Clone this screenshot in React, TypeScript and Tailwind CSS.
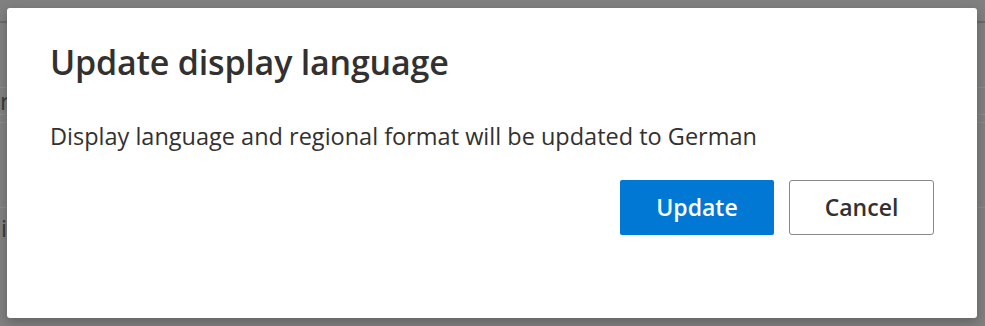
import React from 'react'

const font = { fontFamily: '"Open Sans", "Noto Sans", "Liberation Sans", sans-serif' }

function Backdrop() {
  // faint page content sitting behind the dim overlay
  return (
    <div className="absolute inset-0 bg-[#808080]">
      <div className="h-[21px]" />
      <div className="h-[2px] bg-[#6a6a6a]" />
      <div className="h-[64px]" />
      <div className="h-px bg-[#8c8c8c]" />
      <div className="h-[26px] flex items-center text-[24px] text-[#3a3a3a]">r</div>
      <div className="h-px bg-[#8c8c8c]" />
      <div className="h-[7px]" />
      <div className="h-px bg-[#8a8a8a]" />
      <div className="h-[84px]" />
      <div className="h-px bg-[#8a8a8a]" />
      <div className="h-[40px] flex items-center text-[24px] text-[#3a3a3a] pl-[1px]">i</div>
    </div>
  )
}

export default function App() {
  return (
    <div className="relative w-[985px] h-[326px] overflow-hidden" style={font}>
      <Backdrop />
      <div className="absolute left-[7px] top-[8px] w-[970px] h-[310px] bg-white rounded-[3px] shadow-[0_4px_12px_rgba(0,0,0,0.25)] px-[43px] pt-[31px] flex flex-col">
        <h1 className="text-[34px] leading-[46px] font-semibold text-[#323130] tracking-[-0.2px]">
          Update display language
        </h1>
        <p className="mt-[35px] text-[23.5px] leading-[32px] text-[#323130]">
          Display language and regional format will be updated to German
        </p>
        <div className="mt-[28px] flex justify-end gap-[15px]">
          <button className="w-[154px] h-[55px] rounded-[2px] bg-[#0078d4] text-white text-[23px] font-semibold">
            Update
          </button>
          <button className="w-[145px] h-[55px] rounded-[3px] border border-[#8a8886] bg-white text-[#323130] text-[23px] font-semibold">
            Cancel
          </button>
        </div>
      </div>
    </div>
  )
}
